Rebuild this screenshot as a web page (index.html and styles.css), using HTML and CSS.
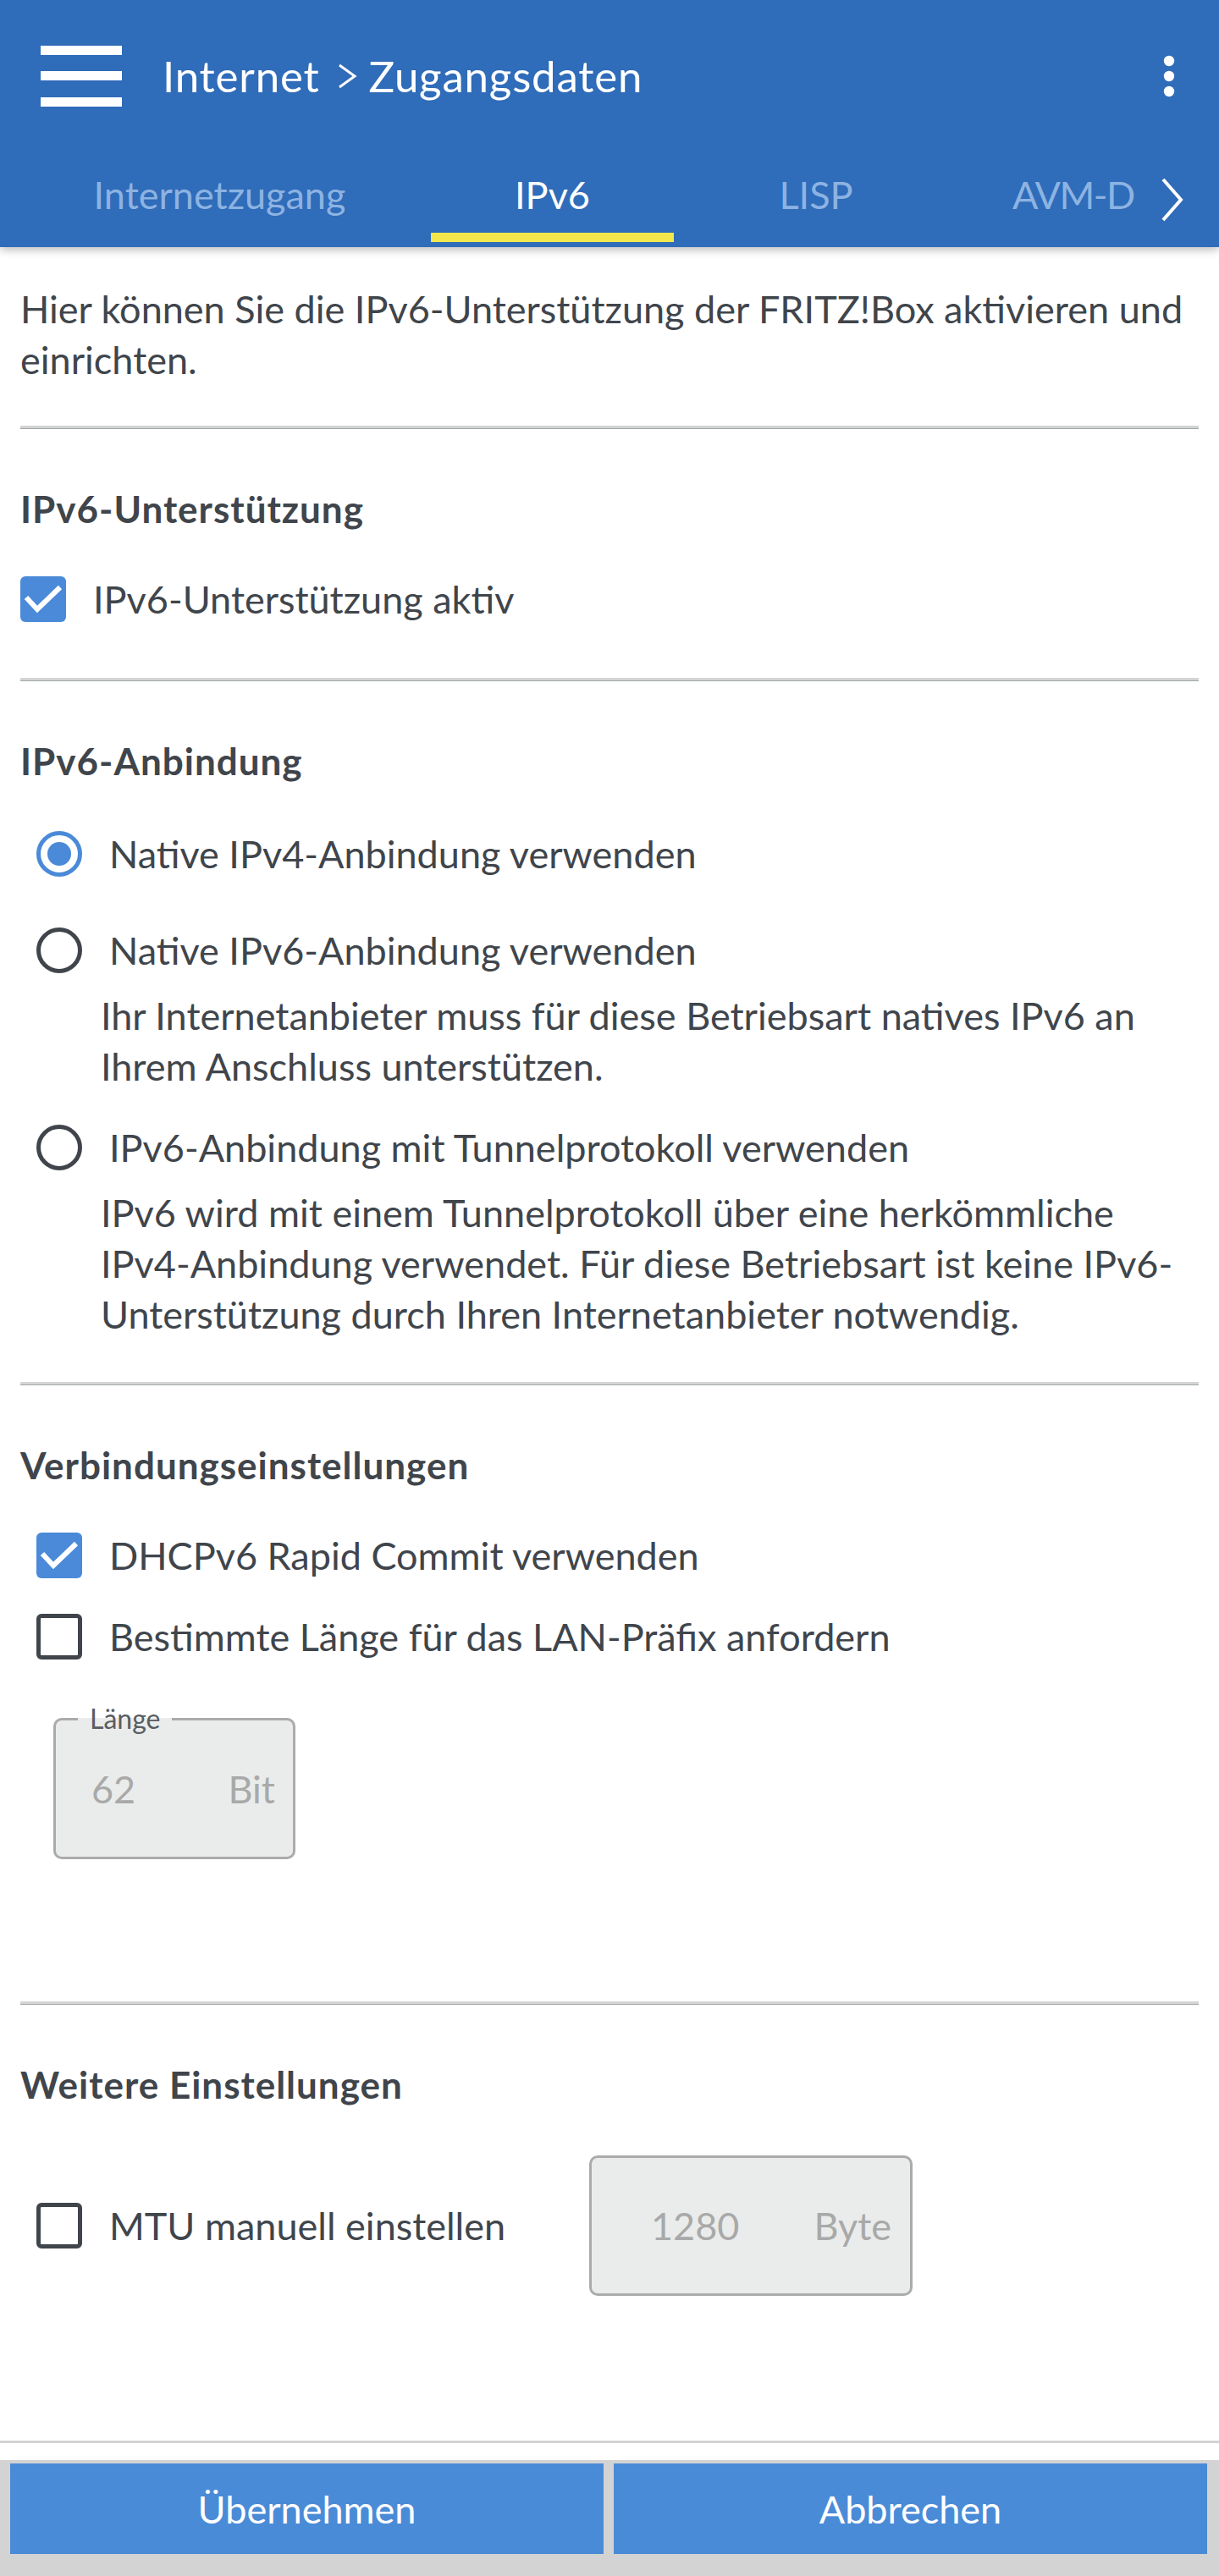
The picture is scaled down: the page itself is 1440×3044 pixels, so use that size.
FILE: index.html
```html
<!DOCTYPE html>
<html lang="de">
<head>
<meta charset="utf-8">
<title>Internet &gt; Zugangsdaten</title>
<link rel="stylesheet" href="styles.css">
</head>
<body>
<div class="page">
  <header class="appbar">
    <div class="topbar">
      <svg class="burger" width="96" height="72" viewBox="0 0 96 72"><rect x="0" y="0" width="96" height="11" fill="#fff"/><rect x="0" y="30" width="96" height="11" fill="#fff"/><rect x="0" y="61" width="96" height="11" fill="#fff"/></svg>
      <div class="crumbs">
        <span>Internet</span>
        <svg class="crumb-sep" width="24" height="30" viewBox="0 0 24 30"><polyline points="3,2 21,15 3,28" fill="none" stroke="#fff" stroke-width="3"/></svg>
        <span>Zugangsdaten</span>
      </div>
      <svg class="more" width="14" height="50" viewBox="0 0 14 50"><circle cx="7" cy="7" r="6.2" fill="#fff"/><circle cx="7" cy="25" r="6.2" fill="#fff"/><circle cx="7" cy="43" r="6.2" fill="#fff"/></svg>
    </div>
    <nav class="tabbar">
      <div class="tabs">
        <div class="tab tab-1"><span class="tab-text">Internetzugang</span><span class="tab-line"></span></div>
        <div class="tab tab-2 active"><span class="tab-text">IPv6</span><span class="tab-line"></span></div>
        <div class="tab tab-3"><span class="tab-text">LISP</span><span class="tab-line"></span></div>
        <div class="tab tab-4"><span class="tab-text">AVM-D</span><span class="tab-line"></span></div>
      </div>
      <div class="tab-next">
        <svg width="28" height="52" viewBox="0 0 28 52"><polyline points="3,2 24,26 3,50" fill="none" stroke="#fff" stroke-width="4"/></svg>
      </div>
    </nav>
  </header>

  <main class="content">
    <p class="intro">Hier können Sie die IPv6-Unterstützung der FRITZ!Box aktivieren und einrichten.</p>

    <hr class="divider">
    <h2 class="sec-title">IPv6-Unterstützung</h2>
    <div class="opt opt-flush first">
      <span class="cb checked"><svg width="54" height="54" viewBox="0 0 54 54"><polyline points="7,25 20,39 47,13" fill="none" stroke="#fff" stroke-width="6"/></svg></span>
      <span class="opt-label">IPv6-Unterstützung aktiv</span>
    </div>

    <hr class="divider d2">
    <h2 class="sec-title">IPv6-Anbindung</h2>
    <div class="opt first radio-gap">
      <span class="radio checked"></span>
      <span class="opt-label">Native IPv4-Anbindung verwenden</span>
    </div>
    <div class="opt radio-gap">
      <span class="radio"></span>
      <span class="opt-label">Native IPv6-Anbindung verwenden</span>
    </div>
    <p class="desc">Ihr Internetanbieter muss für diese Betriebsart natives IPv6 an Ihrem Anschluss unterstützen.</p>
    <div class="opt after-desc">
      <span class="radio"></span>
      <span class="opt-label">IPv6-Anbindung mit Tunnelprotokoll verwenden</span>
    </div>
    <p class="desc">IPv6 wird mit einem Tunnelprotokoll über eine herkömmliche IPv4-Anbindung verwendet. Für diese Betriebsart ist keine IPv6-Unterstützung durch Ihren Internetanbieter notwendig.</p>

    <hr class="divider d3">
    <h2 class="sec-title">Verbindungseinstellungen</h2>
    <div class="opt first">
      <span class="cb checked"><svg width="54" height="54" viewBox="0 0 54 54"><polyline points="7,25 20,39 47,13" fill="none" stroke="#fff" stroke-width="6"/></svg></span>
      <span class="opt-label">DHCPv6 Rapid Commit verwenden</span>
    </div>
    <div class="opt check-gap">
      <span class="cb"></span>
      <span class="opt-label">Bestimmte Länge für das LAN-Präfix anfordern</span>
    </div>
    <fieldset class="field">
      <legend>Länge</legend>
      <div class="field-row"><span>62</span><span>Bit</span></div>
    </fieldset>

    <hr class="divider d4">
    <h2 class="sec-title">Weitere Einstellungen</h2>
    <div class="mtu-row">
      <div class="mtu-opt">
        <span class="cb"></span>
        <span class="opt-label">MTU manuell einstellen</span>
      </div>
      <div class="mtu-input"><span>1280</span><span>Byte</span></div>
    </div>
  </main>

  <footer class="footer">
    <div class="footer-line"></div>
    <div class="footer-bar">
      <button class="btn">Übernehmen</button>
      <button class="btn">Abbrechen</button>
    </div>
  </footer>
</div>
</body>
</html>
```
FILE: styles.css
```css
* { box-sizing: border-box; }
html, body { margin: 0; padding: 0; }
body {
  font-family: Lato, "Open Sans", sans-serif;
  font-size: 45px;
  line-height: 60px;
  color: #40454b;
  background: #fff;
}
.page {
  display: flex;
  flex-direction: column;
  min-height: 100vh;
}

/* ---------- app bar ---------- */
.appbar {
  background: #2f6cb9;
  box-shadow: 0 3px 10px rgba(0, 0, 0, 0.28);
  position: relative;
  z-index: 2;
}
.topbar {
  height: 180px;
  display: flex;
  align-items: center;
  padding: 0 52px 0 48px;
}
.burger { flex: none; display: block; }
.crumbs {
  flex: 1;
  display: flex;
  align-items: center;
  margin-left: 48px;
  color: #fff;
  font-size: 51px;
  letter-spacing: 0.8px;
  line-height: 60px;
}
.crumb-sep { margin: 0 14px 0 20px; display: block; }
.more { flex: none; display: block; }

.tabbar {
  height: 112px;
  display: flex;
}
.tabs {
  width: 1352px;
  display: flex;
  overflow: hidden;
  white-space: nowrap;
}
.tab {
  flex: none;
  display: flex;
  flex-direction: column;
  align-items: center;
  padding-top: 20px;
  color: #8db3e2;
  font-size: 45px;
}
.tab-text { line-height: 60px; height: 60px; }
.tab-line {
  align-self: stretch;
  height: 11px;
  margin-top: 15px;
}
.tab.active { color: #fff; }
.tab.active .tab-line { background: #f4e74c; }
.tab-1 { width: 509px; padding-left: 10px; }
.tab-2 { width: 287px; }
.tab-3 { width: 336px; }
.tab-4 { align-items: flex-start; padding-left: 64px; letter-spacing: -1.5px; }
.tab-next {
  flex: 1;
  display: flex;
  align-items: flex-start;
  padding: 30px 0 0 19px;
}
.tab-next svg { display: block; }

/* ---------- content ---------- */
.content {
  padding: 43px 24px 0;
}
.intro { margin: 0; }
.divider {
  margin: 48px 0 0;
  height: 4px;
  border: 0;
  border-top: 3px solid #d4d4d4;
  border-bottom: 1px solid #a1a8a8;
}
.d2 { margin-top: 63px; }
.d3 { margin-top: 50px; }
.d4 { margin-top: 168px; }
.sec-title {
  margin: 68px 0 0;
  font-size: 44px;
  letter-spacing: 1px;
  line-height: 52px;
  font-weight: 700;
  color: #40454b;
}
.opt {
  display: flex;
  align-items: center;
  height: 60px;
  padding-left: 19px;
  margin-top: 36px;
}
.opt.first { margin-top: 51px; }
.opt.radio-gap { margin-top: 54px; }
.opt.after-desc { margin-top: 36px; }
.opt-flush { padding-left: 0; }
.opt-label { margin-left: 32px; white-space: nowrap; }

.cb {
  flex: none;
  width: 54px;
  height: 54px;
  border: 5px solid #40454b;
  border-radius: 6px;
}
.cb.checked {
  border: 0;
  background: #4a8ad8;
}
.cb svg { display: block; }

.radio {
  flex: none;
  width: 54px;
  height: 54px;
  border: 5px solid #40454b;
  border-radius: 50%;
  display: flex;
  align-items: center;
  justify-content: center;
}
.radio.checked { border-color: #4a8ad8; }
.radio.checked::after {
  content: "";
  width: 28px;
  height: 28px;
  border-radius: 50%;
  background: #4a8ad8;
}

.desc {
  margin: 17px 0 0;
  padding-left: 95px;
}

/* fieldset */
.field {
  margin: 47px 0 0 39px;
  width: 286px;
  border: 3px solid #ababab;
  border-radius: 10px;
  background: #eaeceb;
  padding: 0 0 0 26px;
  min-inline-size: 0;
}
.field legend {
  padding: 0 14px;
  font-size: 32px;
  line-height: 40px;
  color: #585d62;
}
.field-row {
  display: flex;
  justify-content: space-between;
  height: 60px;
  margin: 33px 0 50px;
  padding: 0 21px 0 16px;
  color: #a9a9a9;
}

/* MTU */
.mtu-row {
  display: flex;
  align-items: center;
  margin-top: 58px;
  padding-left: 19px;
}
.mtu-opt {
  width: 653px;
  display: flex;
  align-items: center;
}
.mtu-input {
  width: 382px;
  height: 166px;
  border: 3px solid #ababab;
  border-radius: 10px;
  background: #eaeceb;
  display: flex;
  align-items: center;
  justify-content: space-between;
  padding: 0 22px 0 70px;
  color: #a9a9a9;
}

/* ---------- footer ---------- */
.footer { margin-top: auto; }
.footer-line { height: 3px; background: #d3d3d3; }
.footer-bar {
  margin-top: 20px;
  height: 137px;
  background: #d3d3d3;
  display: flex;
  gap: 12px;
  padding: 4px 14px 0 12px;
  align-items: flex-start;
}
.btn {
  flex: 1;
  height: 107px;
  border: 0;
  background: #4a8bd7;
  color: #fff;
  font-family: Lato, "Open Sans", sans-serif;
  font-size: 45px;
  padding: 0;
}
```
